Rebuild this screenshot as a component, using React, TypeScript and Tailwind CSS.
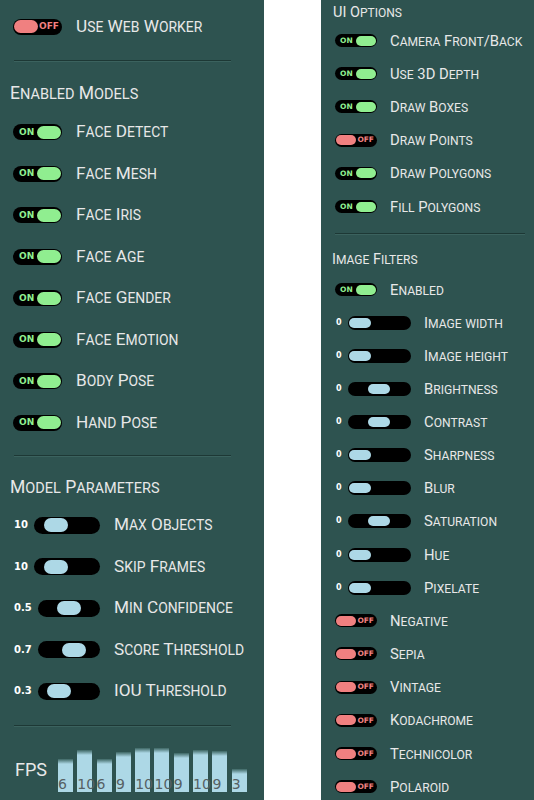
import React from 'react'

const models = ['Face Detect', 'Face Mesh', 'Face Iris', 'Face Age', 'Face Gender', 'Face Emotion', 'Body Pose', 'Hand Pose']

const params = [
  { label: 'Max Objects', value: '10', pos: 0.2 },
  { label: 'Skip Frames', value: '10', pos: 0.2 },
  { label: 'Min Confidence', value: '0.5', pos: 0.5 },
  { label: 'Score Threshold', value: '0.7', pos: 0.66 },
  { label: 'IOU Threshold', value: '0.3', pos: 0.21 },
]

const uiOptions = [
  { label: 'Camera Front/Back', on: true },
  { label: 'Use 3D Depth', on: true },
  { label: 'Draw Boxes', on: true },
  { label: 'Draw Points', on: false },
  { label: 'Draw Polygons', on: true },
  { label: 'Fill Polygons', on: true },
]

const filterSliders = [
  { label: 'Image width', pos: 0 },
  { label: 'Image height', pos: 0 },
  { label: 'Brightness', pos: 0.5 },
  { label: 'Contrast', pos: 0.5 },
  { label: 'Sharpness', pos: 0 },
  { label: 'Blur', pos: 0 },
  { label: 'Saturation', pos: 0.5 },
  { label: 'Hue', pos: 0 },
  { label: 'Pixelate', pos: 0 },
]

const filterToggles = ['Negative', 'Sepia', 'Vintage', 'Kodachrome', 'Technicolor', 'Polaroid']

const fps = [
  { v: 6, h: 33 },
  { v: 10, h: 42 },
  { v: 6, h: 33 },
  { v: 9, h: 40 },
  { v: 10, h: 44 },
  { v: 10, h: 44 },
  { v: 9, h: 39 },
  { v: 10, h: 42 },
  { v: 9, h: 41 },
  { v: 3, h: 23 },
]

// small caps by hand: capitals stay big, lowercase runs are uppercased at a smaller size
function SmallCaps({ text, big, small }: { text: string; big: string; small: string }) {
  const runs: { s: string; low: boolean }[] = []
  for (const ch of text) {
    const low = ch !== ch.toUpperCase()
    const last = runs[runs.length - 1]
    if (last && last.low === low) last.s += ch
    else runs.push({ s: ch, low })
  }
  return (
    <span className="leading-none whitespace-nowrap">
      {runs.map((r, i) =>
        r.low ? (
          <span key={i} className={small}>{r.s.toUpperCase()}</span>
        ) : (
          <span key={i} className={big}>{r.s}</span>
        )
      )}
    </span>
  )
}

function Divider({ className }: { className: string }) {
  return <div className={`h-[2px] border-t border-[#1d3835] border-b border-b-[#3b625e] ${className}`}></div>
}

function BigLabel({ text }: { text: string }) {
  return (
    <span className="ml-[14px] text-[#e8e8e8]">
      <SmallCaps text={text} big="text-[17.2px]" small="text-[13.9px]" />
    </span>
  )
}

function SmallLabel({ text }: { text: string }) {
  return (
    <span className="ml-[13px] text-[#e8e8e8]">
      <SmallCaps text={text} big="text-[14.8px]" small="text-[12.1px]" />
    </span>
  )
}

function BigToggle({ label, on }: { label: string; on: boolean }) {
  return (
    <div className="flex items-center h-[41.5px] pl-[13px]">
      {on ? (
        <div className="flex items-center justify-between w-[49px] h-[16px] rounded-full bg-black pl-[6px] pr-[1px]">
          <span className="text-[9px] font-bold leading-none text-[#90ee90] font-['DejaVu_Sans',sans-serif]">ON</span>
          <span className="w-[24px] h-[13px] rounded-full bg-[#90ee90]"></span>
        </div>
      ) : (
        <div className="flex items-center justify-between w-[49px] h-[16px] rounded-full bg-black pl-[1px] pr-[3px]">
          <span className="w-[24px] h-[13px] rounded-full bg-[#f08080]"></span>
          <span className="text-[9px] font-bold leading-none text-[#f08080] font-['DejaVu_Sans',sans-serif]">OFF</span>
        </div>
      )}
      <BigLabel text={label} />
    </div>
  )
}

function BigSlider({ label, value, pos }: { label: string; value: string; pos: number }) {
  return (
    <div className="flex items-center h-[41.5px] pl-[14px]">
      <div className="flex items-center gap-[6px] w-[86px]">
        <span className="text-[10px] font-bold leading-none text-white font-['DejaVu_Sans',sans-serif]">{value}</span>
        <div className="flex-1 h-[17px] rounded-full bg-black px-[2px] flex items-center">
          <div className="flex-1 relative h-[14px]">
            <span
              className="absolute top-0 w-[24px] h-[14px] rounded-full bg-[#add8e6]"
              style={{ left: `calc(${pos} * (100% - 24px))` }}
            ></span>
          </div>
        </div>
      </div>
      <BigLabel text={label} />
    </div>
  )
}

function SmallToggle({ label, on }: { label: string; on: boolean }) {
  return (
    <div className="flex items-center h-[33.2px] pl-[14px]">
      {on ? (
        <div className="flex items-center justify-between w-[42px] h-[13px] rounded-full bg-black pl-[5px] pr-[1px]">
          <span className="text-[7.5px] font-bold leading-none text-[#90ee90] font-['DejaVu_Sans',sans-serif]">ON</span>
          <span className="w-[20px] h-[10px] rounded-full bg-[#90ee90]"></span>
        </div>
      ) : (
        <div className="flex items-center justify-between w-[42px] h-[13px] rounded-full bg-black pl-[1px] pr-[3px]">
          <span className="w-[20px] h-[10px] rounded-full bg-[#f08080]"></span>
          <span className="text-[7.5px] font-bold leading-none text-[#f08080] font-['DejaVu_Sans',sans-serif]">OFF</span>
        </div>
      )}
      <SmallLabel text={label} />
    </div>
  )
}

function SmallSlider({ label, pos }: { label: string; pos: number }) {
  return (
    <div className="flex items-center h-[33.1px] pl-[15px]">
      <div className="flex items-center gap-[6px] w-[75px]">
        <span className="text-[8px] font-bold leading-none text-white font-['DejaVu_Sans',sans-serif]">0</span>
        <div className="flex-1 h-[14px] rounded-full bg-black px-[1px] flex items-center">
          <div className="flex-1 relative h-[10px]">
            <span
              className="absolute top-0 w-[22px] h-[10px] rounded-full bg-[#add8e6]"
              style={{ left: `calc(${pos} * (100% - 22px))` }}
            ></span>
          </div>
        </div>
      </div>
      <SmallLabel text={label} />
    </div>
  )
}

export default function App() {
  return (
    <div className="flex w-[534px] h-[800px] bg-white gap-[57px] overflow-hidden font-['Roboto',sans-serif]">
      <div className="w-[264px] h-full bg-[#2e5350] flex flex-col pt-[6px]">
        <BigToggle label="Use Web Worker" on={false} />
        <Divider className="mt-[12px] ml-[14px] w-[217px]" />
        <div className="mt-[22px] pl-[10px] h-[20px] flex items-center text-[#e8e8e8]">
          <SmallCaps text="Enabled Models" big="text-[17.5px]" small="text-[14.5px]" />
        </div>
        <div className="mt-[8px] flex flex-col">
          {models.map((m) => (
            <BigToggle key={m} label={m} on={true} />
          ))}
        </div>
        <Divider className="mt-[11px] ml-[14px] w-[217px]" />
        <div className="mt-[21px] pl-[10px] h-[20px] flex items-center text-[#e8e8e8]">
          <SmallCaps text="Model Parameters" big="text-[17.5px]" small="text-[14.5px]" />
        </div>
        <div className="mt-[7px] flex flex-col">
          {params.map((p) => (
            <BigSlider key={p.label} label={p.label} value={p.value} pos={p.pos} />
          ))}
        </div>
        <Divider className="mt-[13px] ml-[14px] w-[217px]" />
        <div className="mt-[20px] flex items-end pl-[15px] h-[45px]">
          <span className="w-[43px] self-center text-[18px] leading-none text-[#e8e8e8]">FPS</span>
          <div className="flex items-end gap-[4.3px] h-full">
            {fps.map((b, i) => (
              <div
                key={i}
                className="w-[15px] flex items-end bg-[linear-gradient(to_bottom,#3d6663,#add8e6_5px)]"
                style={{ height: b.h }}
              >
                <span className="text-[14px] leading-[15px] text-[#566063] font-['DejaVu_Sans',sans-serif] whitespace-nowrap">{b.v}</span>
              </div>
            ))}
          </div>
        </div>
      </div>
      <div className="flex-1 h-full bg-[#2e5350] flex flex-col pt-[4px]">
        <div className="pl-[12px] h-[16px] flex items-center text-[#e8e8e8]">
          <SmallCaps text="UI Options" big="text-[14.5px]" small="text-[12px]" />
        </div>
        <div className="mt-[4px] flex flex-col">
          {uiOptions.map((o) => (
            <SmallToggle key={o.label} label={o.label} on={o.on} />
          ))}
        </div>
        <Divider className="mt-[10px] ml-[14px] w-[190px]" />
        <div className="mt-[16px] pl-[11px] h-[16px] flex items-center text-[#e8e8e8]">
          <SmallCaps text="Image Filters" big="text-[14.5px]" small="text-[12px]" />
        </div>
        <div className="mt-[6px] flex flex-col">
          <SmallToggle label="Enabled" on={true} />
          {filterSliders.map((s) => (
            <SmallSlider key={s.label} label={s.label} pos={s.pos} />
          ))}
          {filterToggles.map((t) => (
            <SmallToggle key={t} label={t} on={false} />
          ))}
        </div>
      </div>
    </div>
  )
}
